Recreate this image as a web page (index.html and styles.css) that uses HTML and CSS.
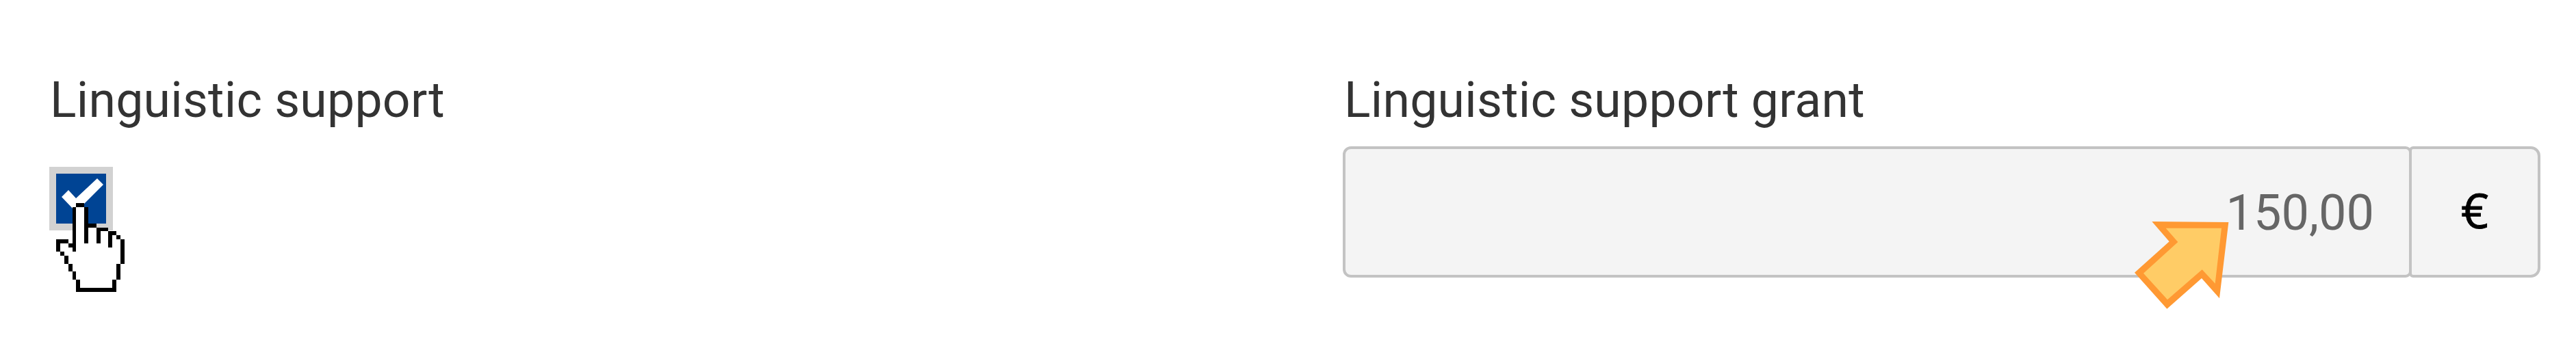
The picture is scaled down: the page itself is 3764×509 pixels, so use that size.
FILE: index.html
```html
<!DOCTYPE html>
<html lang="en">

<head>
    <meta charset="UTF-8">
    <meta name="viewport" content="width=device-width, initial-scale=1.0">
    <title>Linguistic support</title>
    <link rel="stylesheet" href="styles.css">
</head>

<body>
    <div class="form-row">
        <!-- Linguistic support -->
        <div class="field">
            <div class="field-label" id="supportLabel">Linguistic support</div>
            <div class="checkbox" role="checkbox" aria-checked="true" aria-labelledby="supportLabel">
                <svg class="check-icon" viewBox="0 0 73 73">
                    <polygon points="8,34 18,24 29,36 60,7 69,16 29,56" fill="#fff" />
                </svg>
                <!-- Hand pointer -->
                <svg class="hand-pointer" viewBox="0 0 17 22" shape-rendering="crispEdges">
                    <path fill="#fff" d="M5 1h2v5h3v1h3v1h2v1h1v6h-1v4h-1v2H6v-2H5v-2H4v-2H3v-2H2v-1H1v-2h2v1h2z" />
                    <path fill="#000" d="M5 0h2v1H5zM4 1h1v11H4zM7 1h1v9H7zM8 5h2v1H8zM10 6h3v1h-3zM10 7h1v3h-1zM13 7h2v1h-2zM13 8h1v3h-1zM15 8h1v1h-1zM16 9h1v6h-1zM15 15h1v4h-1zM14 19h1v3h-1zM5 21h9v1H5zM5 19h1v2H5zM4 17h1v2H4zM3 15h1v2H3zM2 13h1v2H2zM1 12h1v1H1zM0 9h1v3H0zM1 9h2v1H1zM3 10h1v1H3z" />
                </svg>
            </div>
        </div>

        <!-- Linguistic support grant -->
        <div class="field">
            <div class="field-label grant-label">Linguistic support grant</div>
            <div class="input-group">
                <div class="amount">150,00</div>
                <div class="currency">€</div>
                <!-- Arrow pointing at the amount -->
                <svg class="arrow" viewBox="0 0 414 384">
                    <polygon points="76,0 412,3 372,337 294,249 142,383 0,224 152,88" fill="#ff9933" />
                    <polygon points="137,29 381,29 353,272 296,211 144,343 39,227 190,90" fill="#ffcc66" />
                </svg>
            </div>
        </div>
    </div>
</body>

</html>
```

FILE: styles.css
```css
body {
    font-family: Roboto, Arial, sans-serif;
    margin: 0;
    background-color: #fff;
    color: #333;
}

.form-row {
    display: grid;
    grid-template-columns: 1890px 1750px;
    box-sizing: border-box;
    min-height: 509px;
    padding: 105px 0 0 72px;
}

.field-label {
    padding-left: 1px;
    font-size: 71.5px;
    line-height: 84px;
    letter-spacing: 0.27px;
    white-space: nowrap;
}

.grant-label {
    padding-left: 2px;
}

.checkbox {
    position: relative;
    box-sizing: border-box;
    width: 93px;
    height: 93px;
    margin-top: 55px;
    border: 10px solid #d2d2d2;
    background-color: #004494;
}

.check-icon {
    display: block;
    width: 73px;
    height: 73px;
}

.hand-pointer {
    position: absolute;
    left: 0;
    top: 43px;
    width: 100px;
    height: 130px;
}

.input-group {
    position: relative;
    display: flex;
    height: 192px;
    margin-top: 25px;
}

.amount,
.currency {
    box-sizing: border-box;
    border: 4px solid #c3c3c3;
    background-color: #f4f4f4;
}

.amount {
    width: 1562px;
    padding-right: 51px;
    border-radius: 12px 9px 9px 12px;
    color: #666;
    font-size: 72px;
    line-height: 188px;
    text-align: right;
}

.currency {
    width: 192px;
    margin-left: -4px;
    border-radius: 6px 14px 14px 6px;
    color: #000;
    font-family: "Open Sans", "Noto Sans", sans-serif;
    font-size: 70px;
    line-height: 179px;
    text-align: center;
    -webkit-text-stroke: 1px #000;
}

.arrow {
    position: absolute;
    left: 1157px;
    top: 110px;
    width: 138px;
    height: 128px;
}
```
